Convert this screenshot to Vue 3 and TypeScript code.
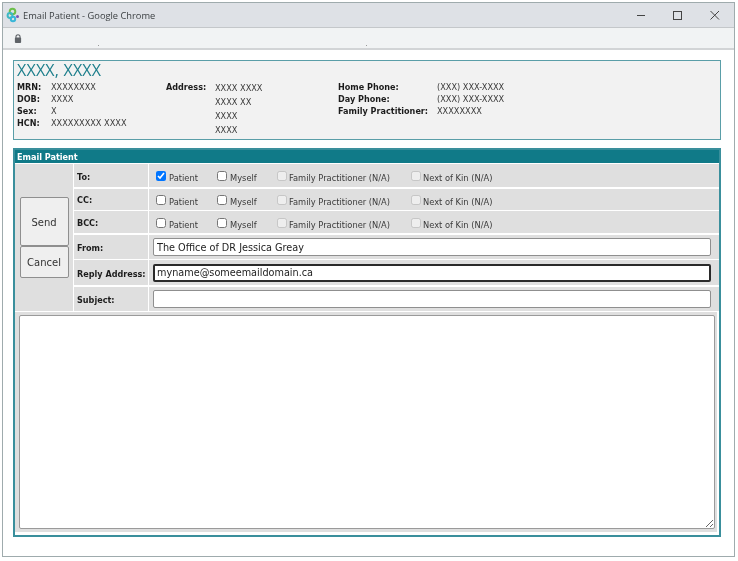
<script setup lang="ts">
interface Row { label: string; patient: boolean }
const rows: Row[] = [
  { label: 'To:', patient: true },
  { label: 'CC:', patient: false },
  { label: 'BCC:', patient: false },
]
const demographics: [string, string][] = [
  ['MRN:', 'XXXXXXXX'],
  ['DOB:', 'XXXX'],
  ['Sex:', 'X'],
  ['HCN:', 'XXXXXXXXX XXXX'],
]
const address = ['XXXX XXXX', 'XXXX XX', 'XXXX', 'XXXX']
const phones: [string, string][] = [
  ['Home Phone:', '(XXX) XXX-XXXX'],
  ['Day Phone:', '(XXX) XXX-XXXX'],
  ['Family Practitioner:', 'XXXXXXXX'],
]
</script>

<template>
  <div class="page">
    <div class="window">
      <header class="titlebar">
        <svg class="logo" width="16" height="16" viewBox="0 0 16 16">
          <circle cx="7.5" cy="4.5" r="2.8" fill="none" stroke="#6cbf4b" stroke-width="2" />
          <circle cx="5" cy="8.5" r="2.4" fill="none" stroke="#3fb8c4" stroke-width="2" />
          <circle cx="8" cy="12" r="2.2" fill="none" stroke="#39b6d8" stroke-width="2" />
          <circle cx="12.5" cy="9.5" r="1.5" fill="#7a4fb5" />
        </svg>
        <span class="title">Email Patient - Google Chrome</span>
        <div class="controls">
          <svg width="12" height="12" viewBox="0 0 12 12"><path d="M2 6.5h8" stroke="#444" stroke-width="1" /></svg>
          <svg width="12" height="12" viewBox="0 0 12 12"><rect x="1.5" y="2.5" width="8" height="8" fill="none" stroke="#444" /></svg>
          <svg width="12" height="12" viewBox="0 0 12 12"><path d="M1.5 2l8.5 8.5M10 2l-8.5 8.5" stroke="#444" stroke-width="1" /></svg>
        </div>
      </header>
      <div class="toolbar">
        <svg width="8" height="9" viewBox="0 0 9 10">
          <path d="M2.2 4.5V3a2.3 2.3 0 0 1 4.6 0v1.5" fill="none" stroke="#5f6368" stroke-width="1.2" />
          <rect x="1" y="4" width="7" height="6" rx="1" fill="#5f6368" />
        </svg>
        <i class="speck first"></i>
        <i class="speck second"></i>
      </div>
      <main class="content">
        <section class="patient">
          <h1 class="name">XXXX, XXXX</h1>
          <div class="info">
            <div class="pairs demo">
              <template v-for="d in demographics" :key="d[0]">
                <b>{{ d[0] }}</b><span>{{ d[1] }}</span>
              </template>
            </div>
            <div class="addr">
              <b>Address:</b>
              <div class="addr-lines"><span v-for="(a, i) in address" :key="i">{{ a }}</span></div>
            </div>
            <div class="pairs phones">
              <template v-for="p in phones" :key="p[0]">
                <b>{{ p[0] }}</b><span>{{ p[1] }}</span>
              </template>
            </div>
          </div>
        </section>

        <section class="panel">
          <div class="panel-head">Email Patient</div>
          <div class="form">
            <div class="actions">
              <button class="btn send">Send</button>
              <button class="btn cancel">Cancel</button>
            </div>
            <template v-for="r in rows" :key="r.label">
              <div class="cell label">{{ r.label }}</div>
              <div class="cell checks">
                <label class="opt"><input type="checkbox" :checked="r.patient" /><span>Patient</span></label>
                <label class="opt"><input type="checkbox" /><span>Myself</span></label>
                <label class="opt off"><input type="checkbox" disabled /><span>Family Practitioner (N/A)</span></label>
                <label class="opt off"><input type="checkbox" disabled /><span>Next of Kin (N/A)</span></label>
              </div>
            </template>
            <div class="cell label">From:</div>
            <div class="cell field"><input class="text" type="text" value="The Office of DR Jessica Greay" /></div>
            <div class="cell label">Reply Address:</div>
            <div class="cell field"><input class="text focus" type="text" value="myname@someemaildomain.ca" /></div>
            <div class="cell label">Subject:</div>
            <div class="cell field"><input class="text" type="text" value="" /></div>
          </div>
          <div class="body-cell"><textarea class="body"></textarea></div>
        </section>
      </main>
    </div>
  </div>
</template>

<style>
html, body { margin: 0; background: #fff; }
</style>

<style scoped>
.page {
  width: 738px;
  height: 561px;
  box-sizing: border-box;
  padding: 2px 3px 4px 2px;
  font-family: "DejaVu Sans", Verdana, sans-serif;
  color: #222;
  overflow: hidden;
}
.window {
  height: 100%;
  box-sizing: border-box;
  border: 1px solid #9fabad;
  display: flex;
  flex-direction: column;
  background: #fff;
  filter: blur(0.3px);
}
.titlebar {
  height: 24px;
  flex: none;
  background: #dee1e6;
  display: flex;
  align-items: center;
  padding-left: 2px;
  box-sizing: border-box;
}
.logo { flex: none; }
.title {
  margin-left: 2px;
  font: 9.3px "Open Sans", sans-serif;
  color: #3c4043;
}
.controls {
  margin-left: auto;
  display: flex;
  gap: 25px;
  padding-right: 13px;
}
.toolbar {
  height: 20px;
  flex: none;
  background: #f1f3f4;
  border-top: 1px solid #c4c7ca;
  border-bottom: 2px solid #d2d4d6;
  display: flex;
  align-items: center;
  padding-left: 11px;
}
.speck {
  width: 1px;
  height: 1px;
  background: #9a9a9a;
  align-self: flex-end;
  margin-bottom: 2px;
}
.first { margin-left: 76px; }
.second { margin-left: 267px; }
.content {
  flex: 1;
  padding: 10px 13px 0 10px;
  display: flex;
  flex-direction: column;
  gap: 8px;
  min-height: 0;
}
.patient {
  height: 80px;
  flex: none;
  box-sizing: border-box;
  border: 1px solid #5a9ea8;
  background: #f2f2f2;
  padding: 0 3px;
  width: 708px;
}
.name {
  margin: 0;
  font: 400 16px/18px "Open Sans", "DejaVu Sans", sans-serif;
  color: #1e7f8c;
  letter-spacing: 0.2px;
}
.info {
  display: flex;
  font-size: 8.2px;
  margin-top: 2px;
  color: #3a3a3a;
}
.info b { color: #1c1c1c; font-size: 8.1px; }
.pairs { display: grid; row-gap: 0; align-content: start; }
.pairs > * { line-height: 12px; white-space: nowrap; }
.demo { grid-template-columns: 34px auto; width: 149px; flex: none; }
.addr { display: flex; width: 172px; flex: none; }
.addr b { width: 49px; flex: none; line-height: 12px; }
.addr-lines { display: flex; flex-direction: column; }
.addr-lines span { line-height: 14px; }
.phones { grid-template-columns: 99px auto; }

.panel {
  flex: none;
  width: 708px;
  height: 389px;
  box-sizing: border-box;
  border: 2px solid #3a8f9c;
  background: #fff;
  display: flex;
  flex-direction: column;
}
.panel-head {
  height: 13px;
  flex: none;
  background: #107a88;
  color: #fff;
  font: 700 8.1px/15px "DejaVu Sans", sans-serif;
  padding-left: 2px;
}
.form {
  display: grid;
  grid-template-columns: 58px 74px 1fr;
  grid-template-rows: 23px 21px 22px 24px 25px 24px;
  gap: 1.5px 1px;
  margin-top: 1px;
  flex: none;
}
.actions {
  grid-row: 1 / span 6;
  background: #dfdfdf;
  display: flex;
  flex-direction: column;
  align-items: center;
  padding-top: 33px;
  box-sizing: border-box;
}
.btn {
  width: 49px;
  padding: 1px 0 0;
  box-sizing: border-box;
  background: #efefef;
  border: 1px solid #8f8f8f;
  border-radius: 2px;
  font: 10px "DejaVu Sans", sans-serif;
  color: #333;
}
.send { height: 49px; }
.cancel { height: 32px; }
.cell { background: #dfdfdf; display: flex; align-items: center; }
.label {
  font: 700 8.1px "DejaVu Sans", sans-serif;
  color: #1c1c1c;
  padding: 2px 0 0 3px;
  white-space: nowrap;
}
.checks {
  display: grid;
  grid-template-columns: 61px 60px 134px auto;
  padding: 1px 0 0 7px;
}
.opt {
  display: flex;
  align-items: center;
  gap: 3px;
  font-size: 8.3px;
  color: #3a3a3a;
  white-space: nowrap;
}
.off { gap: 2px; }
.opt span { position: relative; top: 2px; }
.opt input {
  margin: 0;
  width: 10px;
  height: 10px;
  flex: none;
}
.field { padding-left: 4px; }
.text {
  width: 558px;
  height: 18px;
  box-sizing: border-box;
  border: 1px solid #8f8f8f;
  border-radius: 2px;
  padding: 1px 3px 0;
  font: 9.7px "DejaVu Sans", sans-serif;
  color: #222;
  background: #fff;
}
.focus { border: 2px solid #2a2a2a; padding: 0 2px; }
.body-cell {
  flex: 1;
  min-height: 0;
  margin: 1px 2px 3px 0;
  background: #dfdfdf;
  padding: 3.5px 2px 3px 4px;
  display: flex;
}
.body {
  flex: 1;
  margin: 0;
  box-sizing: border-box;
  border: 1px solid #9a9a9a;
  border-radius: 2px;
  background: #fff;
  resize: both;
}
</style>
